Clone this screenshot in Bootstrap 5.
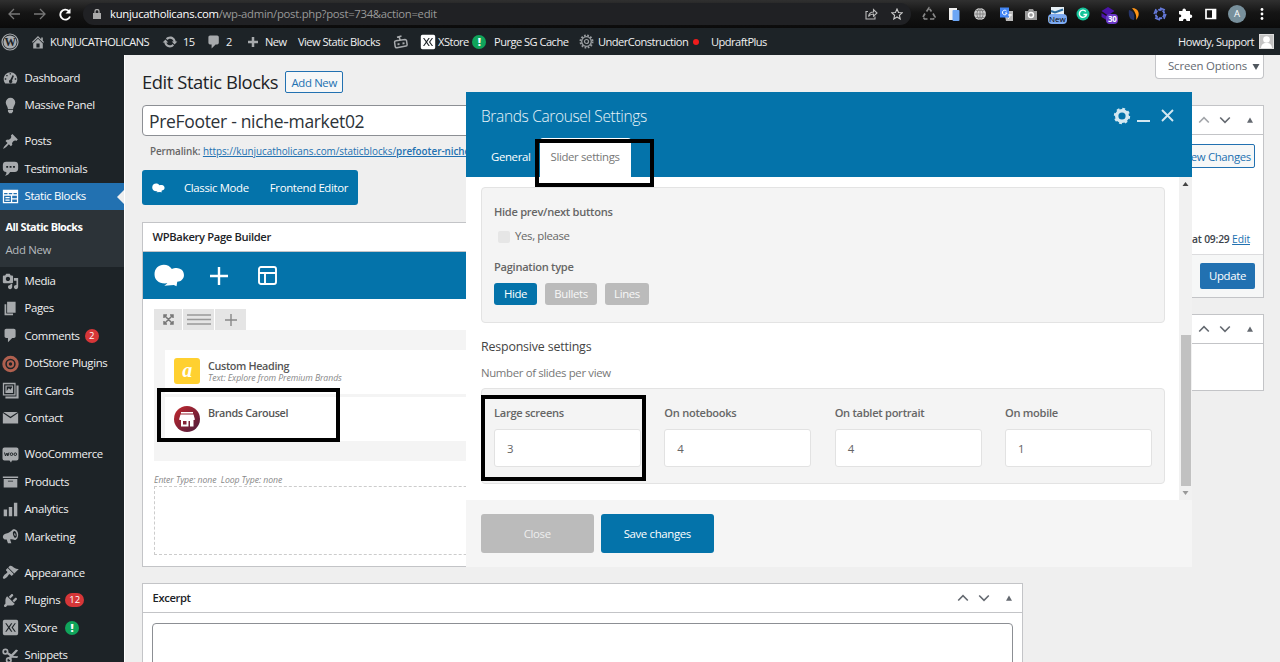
<!DOCTYPE html>
<html lang="en">
<head>
<meta charset="utf-8">
<title>Edit Static Blocks</title>
<link href="https://cdn.jsdelivr.net/npm/bootstrap@5.3.0/dist/css/bootstrap.min.css" rel="stylesheet">
<style>
body{font-family:"Open Sans","Noto Sans",sans-serif;font-size:11.4px;letter-spacing:-.35px;line-height:16px;background:#efefef;color:#3c434a;height:662px;overflow:hidden}
svg{display:block;flex:none}
.chrome-bar{height:28px;background:linear-gradient(#303030,#151515 45%,#0b0b0b);color:#999;padding-left:7px}
.omnibox{width:828px;height:22px;border-radius:11px;background:#202124;padding:0 7px 0 10px;font-size:11.3px;letter-spacing:-.28px}
.chrome-bar .ext{width:16px;margin-right:9.7px}
.wp-bar{height:27px;background:#1d2327;color:#f0f0f1;font-size:11.1px;letter-spacing:-.52px}
.wp-bar .it{display:flex;align-items:center;white-space:nowrap;flex:none}
.wp-side{width:124px;background:#1d2327;color:#f0f0f1;padding-top:9px;height:607px;overflow:hidden;flex:none;box-shadow:1px 0 #fff}
.side-it{height:27.4px;display:flex;align-items:center;padding-left:2px;white-space:nowrap;position:relative}
.side-it svg{margin-right:5.5px;color:#a7aaad}
.side-it.on{background:#2271b1;color:#fff}
.side-it.on svg{color:#fff}
.side-it.on:after{content:"";position:absolute;right:0;top:7px;border:7px solid transparent;border-left:0;border-right-color:#efefef}
.side-gap{height:9px}
.side-sub{background:#2c3338;height:57.4px;padding:5px 0 0 5.5px}
.side-sub div{height:23px;line-height:23px}
.pill{background:#d63638;color:#fff;border-radius:8px;height:14px;min-width:14px;padding:0 4px;font-size:9.5px;line-height:14px;margin-left:5px;text-align:center;letter-spacing:0}
.pill.ok{background:#10a45b;font-weight:800;font-size:11px}
.wp-main{padding-left:18px;width:1156px;height:607px;overflow:hidden}
.scr-opt{width:109px;height:24px;margin-right:16px;background:#fff;border:1px solid #c3c4c7;border-top:0;border-radius:0 0 4px 4px;color:#646970;padding-left:12px;line-height:22px;letter-spacing:-.15px}
.page-ttl{font-size:18.4px;line-height:24px;color:#1d2327;font-weight:400;margin:-1px 7px 0 0;letter-spacing:-.43px}
.o-btn{border:1px solid #2271b1;border-radius:2px;background:#f6f7f7;color:#2271b1;display:block;text-align:center}
.col-l{width:881px}
.col-r{width:240px;margin-left:1px}
.ttl-in{height:31px;border:1px solid #8c8f94;border-radius:4px;background:#fff;font-size:17.5px;letter-spacing:-.32px;color:#2c3338;padding-left:6px;line-height:30px}
.mbox{background:#fff;border:1px solid #c3c4c7}
.mhead{height:29px;border-bottom:1px solid #c3c4c7;display:flex;align-items:center;padding:0 9px 0 9.5px;font-weight:600;color:#1d2327;font-size:11.2px}
.ord{display:flex;align-items:center;margin-left:auto;color:#646970}
.ord svg:nth-child(2){margin:0 15px 0 8.5px}
.ord svg:last-child{margin-right:.5px}
.mode-bar{width:216px;height:35px;background:#0473aa;color:#fff;border-radius:3px;margin-top:11px}
.vc-nav{height:47px;background:#0473aa;padding-left:11px}
.ctl{height:21px;background:#e5e5e5;margin-right:1px;display:flex;align-items:center;justify-content:center}
.vc-row{background:#f4f4f4;height:131px;padding:20px 11px 0}
.vc-el{background:#fff;height:44px;margin-bottom:3px;display:flex;padding:8px 9px 0}
.el-name{line-height:15px;font-weight:600;font-size:10.8px;color:#555}
.hint{font-style:italic;font-size:8.7px;color:#888;line-height:11px;letter-spacing:-.08px}
.dlg{position:absolute;left:466px;top:92px;width:726px;height:475px;background:#fff;color:#666}
.dlg-head{height:85px;background:#0473aa;color:#fff;padding:13px 14px 0 15px}
.dlg-ttl{font-size:15.5px;color:#e8f3f8;font-weight:300;letter-spacing:-.35px}
.dlg-tab{height:38px;line-height:37px;padding:0 10px}
.dlg-tab.on{background:#fff;color:#777;border-radius:3px 3px 0 0;height:39px;width:91px}
.dlg-body{height:323px;padding-left:15px;display:flex}
.pane{background:#f4f4f4;border:1px solid #e3e3e3;border-radius:4px;padding:0 12px;width:684px}
.lbl{font-weight:600;font-size:11.1px;color:#666;letter-spacing:-.28px}
.opt{height:22px;line-height:22px;border-radius:3px;background:#bbb;color:#f7f7f7;text-align:center;margin-right:8px}
.opt.on{background:#0473aa;color:#fff}
.num-in{height:38px;border:1px solid #e2e2e2;border-radius:3px;background:#fff;line-height:37px;padding-left:12px;width:147px;margin-top:8px}
.scrl{width:13px;background:#f1f1f1;margin-left:auto}
.thumb{height:151px;margin:0 1px 0 2px;background:#c1c1c1}
.dlg-foot{height:67px;background:#f5f5f5;padding:14px 15px}
.dlg-foot div{height:39px;line-height:39px;border-radius:3px;text-align:center;color:#fff;width:112.5px}
.mark-box{position:absolute;border:4px solid #000}
</style>
</head>
<body>
<svg width="0" height="0" class="position-absolute" fill="currentColor">
<symbol id="home" viewBox="0 0 20 20"><path d="M16 8.5l1.53 1.53-1.06 1.06L10 4.6l-6.47 6.49-1.06-1.06L10 2.5l4 4v-2h2v4zm-6-2.46l6 5.99V18H4v-5.97zM12 17v-5H8v5h4z"/></symbol>
<symbol id="upd" viewBox="0 0 20 20"><path d="M10.2 3.28c3.53 0 6.43 2.61 6.92 6h2.08l-3.5 4-3.5-4h2.32c-.45-1.97-2.21-3.45-4.32-3.45-1.45 0-2.73.71-3.54 1.78L4.95 5.66C6.23 4.2 8.11 3.28 10.2 3.28zm-.4 13.44c-3.52 0-6.43-2.61-6.92-6H.8l3.5-4 3.5 4H5.48c.45 1.97 2.21 3.45 4.32 3.45 1.45 0 2.73-.71 3.54-1.78l1.71 1.95c-1.28 1.46-3.15 2.38-5.25 2.38z"/></symbol>
<symbol id="com" viewBox="0 0 20 20"><path d="M5 2h9c1.1 0 2 .9 2 2v7c0 1.1-.9 2-2 2h-2l-5 5v-5H5c-1.1 0-2-.9-2-2V4c0-1.1.9-2 2-2z"/></symbol>
<symbol id="dash" viewBox="0 0 20 20"><path fill-rule="evenodd" d="M3.76 17h12.48c1.34-1.63 1.76-3.63 1.76-5.12 0-4.36-3.58-8.06-8-8.06s-8 3.7-8 8.06c0 1.49.42 3.49 1.76 5.12zM9 5h1.600v1.600H9zM5 7h1.600v1.600H5zM3.300 11h1.700v1.600H3.300zM15 11h1.700v1.600H15zM12.600 7.200l1.400 1-2.200 5.300a2 2 0 1 1-2-.8z"/></symbol>
<symbol id="bulb" viewBox="0 0 20 20"><path d="M10 1a5.600 5.600 0 0 0-5.600 5.600c0 2.700 2.100 4.200 2.600 7.400h6c.5-3.200 2.600-4.700 2.600-7.400A5.600 5.600 0 0 0 10 1zM7 15h6v2.200L11.500 19h-3L7 17.200z"/></symbol>
<symbol id="pin" viewBox="0 0 20 20"><path d="M10.44 3.02l1.82-1.82 6.36 6.35-1.83 1.82c-1.05-.68-2.48-.57-3.41.36l-.75.75c-.92.93-1.04 2.35-.35 3.41l-1.83 1.82-2.41-2.41-2.8 2.79c-.42.42-3.38 2.71-3.8 2.290s1.860-3.390 2.280-3.810l2.790-2.790L4.100 9.360l1.830-1.820c1.050.69 2.480.57 3.400-.36l.75-.75c.93-.92 1.050-2.350.36-3.410z"/></symbol>
<symbol id="testi" viewBox="0 0 20 20"><path fill-rule="evenodd" d="M5 2h10a4 4 0 0 1 4 4v4a4 4 0 0 1-4 4H9.500c-1 2-3 4-6 4.500 1.500-1.500 2-3 1.500-4.500a4 4 0 0 1-4-4V6a4 4 0 0 1 4-4zM5 7v2.200h2.200V7zm4 0v2.200h2.200V7zm4 0v2.200h2.200V7z"/></symbol>
<symbol id="stat" viewBox="0 0 20 20"><path fill-rule="evenodd" d="M1 2h18v16H1zm1.500 4v1.300h4V6zm5.500 0v1.300h4V6zm5.500 0v1.300h4V6zM2.500 9v7.500h8V9zm9.500 0v3h5.500V9zm0 4.500v3h5.500v-3zM4 10.500h5V12H4zm0 3h5V15H4z"/></symbol>
<symbol id="media" viewBox="0 0 20 20"><path d="M13 11V4c0-.55-.45-1-1-1h-1.670L9 1H5L3.670 3H2c-.55 0-1 .45-1 1v7c0 .55.45 1 1 1h10c.55 0 1-.45 1-1zM7 4.500c1.380 0 2.500 1.120 2.500 2.500S8.380 9.500 7 9.500 4.500 8.380 4.500 7 5.620 4.500 7 4.500zM14 6h5v10.500c0 1.380-1.120 2.500-2.500 2.500S14 17.880 14 16.500s1.120-2.500 2.500-2.500c.17 0 .34.02.5.05V9h-3V6zm-4 8.050V13h2v3.500c0 1.380-1.120 2.500-2.500 2.500S7 17.880 7 16.500 8.120 14 9.500 14c.17 0 .34.02.5.05z"/></symbol>
<symbol id="pages" viewBox="0 0 20 20"><path d="M6 15V2h10v13H6zm-1 1h8v2H3V5h2v11z"/></symbol>
<symbol id="gift" viewBox="0 0 20 20"><path fill-rule="evenodd" d="M1 1h15v15H1zm1.500 1.500v12h12v-12zM4 4h9v9H4zm1.500 6.500L8 7l2 2 2-3v-.8H5.500zM17 4h2.500v15.500H4V17h13z"/></symbol>
<symbol id="mail" viewBox="0 0 20 20"><path d="M1 4.800L10 11l9-6.200V17H1zM1.500 3.500h17L10 9.200z"/></symbol>
<symbol id="arch" viewBox="0 0 20 20"><path d="M19 4v2H1V4h18zM2 7h16v10H2V7zm11 3V9H7v1h6z"/></symbol>
<symbol id="bars" viewBox="0 0 20 20"><path d="M18 18V2h-4v16h4zm-6 0V7H8v11h4zm-6 0v-8H2v8h4z"/></symbol>
<symbol id="mega" viewBox="0 0 20 20"><path fill-rule="evenodd" d="M13 1.500c3.500-.8 6 2.500 6 6s-1.500 6.500-4 6.500c-2-.5-3.500-.8-5.500-.5L11 18H7l-1.500-4.500C3 14 1 12.500 1 10.500S2.500 7 5 6.500c3-.7 5.500-2.500 8-5zm1.500 2c-1.500.3-2 1.800-1.500 4s1.700 4.500 3 4 1.700-2.500 1.200-4.500-1.500-3.700-2.700-3.500zm-.5 3h1.500l.8 2.500H15z"/></symbol>
<symbol id="brush" viewBox="0 0 20 20"><path d="M14.480 11.060L7.410 3.990l1.500-1.500c.5-.56 2.300-.47 3.510.32 1.210.8 1.430 1.280 2.910 2.100 1.180.64 2.450 1.260 4.450.85zm-.71.71L6.700 4.700 4.930 6.470c-.39.39-.39 1.020 0 1.410l1.060 1.060c.39.39.39 1.030 0 1.420-.6.600-1.430 1.110-2.210 1.690-.35.26-.7.530-1.010.84C1.430 14.230.400 16.080 1.400 17.070c.99 1 2.840-.03 4.180-1.360.31-.31.58-.66.85-1.020.57-.78 1.080-1.610 1.690-2.210.39-.39 1.020-.39 1.410 0l1.060 1.060c.39.39 1.020.39 1.410 0z"/></symbol>
<symbol id="plug" viewBox="0 0 20 20"><path d="M13.110 4.360L9.870 7.600 8 5.730l3.240-3.240c.35-.34 1.050-.2 1.560.32.52.51.66 1.210.31 1.550zm-8 1.770l.91-1.120 9.010 9.010-1.190.84c-.71.71-2.630 1.160-3.820 1.160H6.140L4.900 17.260c-.59.59-1.540.59-2.120 0-.59-.58-.59-1.530 0-2.120l1.240-1.240v-3.880c0-1.130.4-3.190 1.090-3.890zm7.260 3.970l3.240-3.240c.34-.35 1.040-.21 1.550.31.52.51.66 1.210.31 1.550l-3.240 3.250z"/></symbol>
<symbol id="xs" viewBox="0 0 20 20"><path fill-rule="evenodd" d="M3 1h14a2 2 0 0 1 2 2v14a2 2 0 0 1-2 2H3a2 2 0 0 1-2-2V3a2 2 0 0 1 2-2zm.8 4l3.400 5-3.400 5h1.500L8 11.100 10.700 15h1.500L8.900 10l3.300-5h-1.500L8 8.900 5.300 5zM14.800 5l-3.600 5 3.600 5h1.500l-3.500-5 3.500-5z"/></symbol>
<symbol id="sciss" viewBox="0 0 20 20"><g fill="none" stroke="currentColor" stroke-width="2"><circle cx="4" cy="5.500" r="2.600"/><circle cx="8" cy="15.500" r="2.600"/></g><path d="M6 5.500l5 3 5.500-5.500 2.500 1-6 6.500 6 .5-1 2-6.500-.5-2 3-2-1.500 1.500-3.500-4-3z"/></symbol>
<symbol id="up" viewBox="0 0 12 12"><path d="M1.200 8.500L6 3.700l4.800 4.800" fill="none" stroke="currentColor" stroke-width="1.600"/></symbol>
<symbol id="dn" viewBox="0 0 12 12"><path d="M1.200 3.500L6 8.300l4.800-4.800" fill="none" stroke="currentColor" stroke-width="1.600"/></symbol>
<symbol id="tri" viewBox="0 0 8 8"><path d="M4 1.500L7 6.700H1z"/></symbol>
<symbol id="cloud" viewBox="0 0 30 22"><path d="M9.500.5c3.300 0 6 1.500 7.800 4.200C20 3.500 22 3.800 23 4c3.500.3 6 3 6 6.500 0 3.800-3 6.500-6.500 6.500l-.7 4.500-2.600-1.300-9.200.8 3-2.500C5 19.500.5 15.500.5 9.800S4.500.5 9.500.5z"/></symbol>
</svg>

<header class="chrome-bar d-flex align-items-center">
  <svg width="14" height="14" viewBox="0 0 14 14" fill="none" stroke="#777" stroke-width="1.300"><path d="M13 7H2M7 2L2 7l5 5"/></svg>
  <svg class="ms-2 me-2" width="22" height="14" viewBox="-4 0 22 14" fill="none" stroke="#777" stroke-width="1.300"><path d="M1 7h11M7 2l5 5-5 5"/></svg>
  <svg width="13" height="13" viewBox="0 0 13 13" fill="none" stroke="#fff" stroke-width="1.900"><path d="M11 8.500A5 5 0 1 1 9.800 3"/><path d="M11.500.5v5h-5z" fill="#fff" stroke="none"/></svg>
  <div class="omnibox d-flex align-items-center" style="margin-left:11px">
    <svg width="8" height="10" viewBox="0 0 8 10"><path d="M0 4h8v6H0z" fill="#aaa"/><path d="M2 4V2.500a2 2 0 0 1 4 0V4" fill="none" stroke="#aaa" stroke-width="1.300"/></svg>
    <span style="margin-left:9px"><span class="text-white">kunjucatholicans.com</span>/wp-admin/post.php?post=734&amp;action=edit</span>
    <svg class="ms-auto" width="13" height="12" viewBox="0 0 13 12" fill="none" stroke="#bbb" stroke-width="1.100"><path d="M3 3.500H1v7.500h9V8.500M3.500 8.500C4 5.500 6 4 8.500 4V1.500L12 5 8.500 8.200V6C6.500 6 5 6.500 3.500 8.500z"/></svg>
    <svg width="12" height="12" viewBox="0 0 12 12" fill="none" stroke="#ccc" stroke-width="1.100" style="margin:0 1px 0 13px"><path d="M6 1l1.500 3.500 3.700.3-2.800 2.500.8 3.700L6 9l-3.200 2 .8-3.700L.8 4.800l3.700-.3z"/></svg>
  </div>
  <div class="d-flex align-items-center" style="margin-left:9.500px">
    <svg class="ext" height="16" viewBox="0 0 16 16" fill="none" stroke="#888" stroke-width="1.700"><path d="M5.500 5.500L8 2l2.500 3.500M12 7.500l2 3.500-1.500 2H9M6.500 13H3.500L2 11l2-3.500" stroke-dasharray="4.500 1"/></svg>
    <svg class="ext" height="16" viewBox="0 0 16 16"><path d="M3 2h8v12H3z" fill="#eee"/><rect x="6.500" y="4" width="7" height="11" rx="1" fill="#6ca6f5"/></svg>
    <svg class="ext" height="16" viewBox="0 0 16 16"><circle cx="8" cy="8" r="6" fill="#ccc"/><path d="M2 8h12M8 2v12M3.500 4.500h9M3.500 11.500h9M8 2c-4 3-4 9 0 12 4-3 4-9 0-12" fill="none" stroke="#777" stroke-width=".8"/></svg>
    <svg class="ext" height="16" viewBox="0 0 16 16"><path d="M6 5h9v10H8z" fill="#bbb"/><rect x="2" y="1.500" width="9" height="10" fill="#4285f4"/><path d="M8.500 5A2.300 2.300 0 1 0 9 7H7M10 9h4M12 8v1c0 2-1 3-2 4" fill="none" stroke="#fff"/></svg>
    <svg class="ext" height="16" viewBox="0 0 16 16"><path d="M2 5h3l1-2h4l1 2h3v9H2z" fill="#999"/><circle cx="8" cy="9" r="2.500" fill="#999" stroke="#fff" stroke-width="1.400"/></svg>
    <div class="ext position-relative" style="height:16px"><svg width="16" height="16" viewBox="0 0 16 16"><path d="M2 1h13v8H2z" fill="#e7eff5"/><path d="M2 5l4 1.500 8-3" stroke="#2a6ca0" stroke-width="2" fill="none"/></svg><span class="position-absolute rounded-1 text-black" style="left:-1px;top:8px;width:19px;height:10px;background:#7daaf0;font-size:8px;line-height:10px;text-align:center;letter-spacing:0">New</span></div>
    <svg class="ext" height="16" viewBox="0 0 16 16"><circle cx="8" cy="8" r="6.500" fill="#15c39a"/><path d="M10.800 5.500a3.600 3.600 0 1 0 .7 3H8.500" stroke="#fff" stroke-width="1.400" fill="none"/></svg>
    <div class="ext position-relative" style="height:16px"><svg width="16" height="16" viewBox="0 0 16 16"><path d="M8 1l6.500 4L8 9.500 1.500 5zM1.500 7l6.500 4v4l-6.500-4z" fill="#4b14a8"/></svg><span class="position-absolute rounded-1 text-white fw-bold" style="left:6px;top:8px;width:12px;height:10px;background:#6b38c8;font-size:8px;line-height:10px;text-align:center">30</span></div>
    <svg class="ext" height="16" viewBox="0 0 16 16"><path d="M3 4c5 1 6 5 5 10-4 0-6-4-5-10z" fill="#26356c"/><path d="M6 2c7 0 9 7 4 12 1-5-1-8-4-12z" fill="#ff9418"/></svg>
    <svg class="ext" height="16" viewBox="0 0 16 16" fill="none" stroke="#6478d8" stroke-width="2"><circle cx="8" cy="8" r="4.300" stroke-dasharray="3.500 1"/><path d="M8 2l5 2M14 8l-2 5M8 14l-5-2M2 8l2-5" stroke-width="1.400"/></svg>
    <svg class="ext" height="16" viewBox="0 0 16 16"><path d="M2 5h3.500c-.8-3.500 4-3.500 3.500 0h4v3.500c3-.5 3 4 0 3.500V15H9.500c0-3-3.500-3-3.500 0H2v-3.500c3 0 3-3.200 0-3.200z" fill="#fff"/></svg>
    <svg class="ext" height="16" viewBox="0 0 16 16"><path d="M3 3.500h9.500v9H3z" fill="none" stroke="#fff" stroke-width="1.700"/><path d="M9 3h4v10H9z" fill="#fff"/></svg>
    <div class="rounded-circle text-white text-center" style="width:18px;height:18px;line-height:18px;background:#78909c;font-size:9.500px;margin-left:-1px">A</div>
    <svg style="margin-left:14px" width="4" height="12" viewBox="0 0 4 12" fill="#fff"><circle cx="2" cy="1.500" r="1.400"/><circle cx="2" cy="6" r="1.400"/><circle cx="2" cy="10.500" r="1.400"/></svg>
  </div>
</header>

<nav class="wp-bar d-flex align-items-center">
  <svg width="18" height="18" viewBox="0 0 18 18" style="margin:0 11px 0 1px"><circle cx="9" cy="9" r="8" fill="none" stroke="#a7aaad" stroke-width="1.200"/><circle cx="9" cy="9" r="6.600" fill="#a7aaad"/><text x="9" y="13.200" text-anchor="middle" font-family="Liberation Serif" font-weight="bold" font-size="11.500" fill="#1d2327">W</text></svg>
  <span class="it" style="width:132px"><svg width="16" height="16" fill="#a7aaad"><use href="#home"/></svg><span style="margin-left:4px;letter-spacing:-.6px">KUNJUCATHOLICANS</span></span>
  <span class="it" style="width:44px"><svg width="16" height="16" fill="#a7aaad"><use href="#upd"/></svg><span style="margin-left:5px">15</span></span>
  <span class="it" style="width:41px"><svg width="16" height="16" fill="#a7aaad"><use href="#com"/></svg><span style="margin-left:4px">2</span></span>
  <span class="it" style="width:51px"><svg width="12" height="12" viewBox="0 0 12 12" stroke="#a7aaad" stroke-width="2.500"><path d="M6 1v10M1 6h10"/></svg><span style="margin-left:6px">New</span></span>
  <span class="it" style="width:95px">View Static Blocks</span>
  <span class="it" style="width:27px"><svg width="15" height="16" viewBox="0 0 15 16" fill="none" stroke="#a7aaad" stroke-width="1.500"><path d="M3 6.800l9-1.300a1.500 1.500 0 0 1 1.500 1l.6 4a1.500 1.500 0 0 1-1.200 1.600l-9 1.600a1.500 1.500 0 0 1-1.700-1.200L1.600 8.500A1.500 1.500 0 0 1 3 6.800zM7 6L6.300 3M4 3.200L8.500 2"/><path d="M4.500 10.300l2-.3M9.500 9.500l2-.3" stroke-width="1.800"/></svg></span>
  <span class="it" style="width:74px"><svg width="16" height="16" fill="#fff"><use href="#xs"/></svg><span style="margin-left:2px">XStore</span><span class="pill ok" style="margin-left:3.500px">!</span></span>
  <span class="it" style="width:85px">Purge SG Cache</span>
  <span class="it" style="width:132px"><svg width="15" height="15" viewBox="0 0 15 15" fill="none" stroke="#999da0"><circle cx="7.500" cy="7.500" r="6" stroke-width="2" stroke-dasharray="1.700 1.440"/><circle cx="7.500" cy="7.500" r="4.800" stroke-width="1.300"/><circle cx="7.500" cy="7.500" r="2" stroke-width="1.200"/></svg><span style="margin-left:4px">UnderConstruction</span><i class="rounded-circle" style="width:6px;height:6px;background:#f01c1c;margin-left:5px"></i></span>
  <span class="it">UpdraftPlus</span>
  <span class="it ms-auto">Howdy, Support<svg width="15" height="15" viewBox="0 0 15 15" style="margin:0 6px 0 5px"><path d="M0 0h15v15H0z" fill="#ddd"/><path d="M1 1h13v13H1z" fill="#c3c3c3"/><circle cx="7.500" cy="5.500" r="3.300" fill="#fff"/><path d="M2 14c0-3 2-4.500 4-5h3c2 .5 4 2 4 5z" fill="#fff"/></svg></span>
</nav>

<div class="d-flex">
<aside class="wp-side">
  <div class="side-it"><svg width="17" height="17" fill="currentColor"><use href="#dash"/></svg>Dashboard</div>
  <div class="side-it"><svg width="17" height="17" fill="currentColor"><use href="#bulb"/></svg>Massive Panel</div>
  <div class="side-gap"></div>
  <div class="side-it"><svg width="17" height="17" fill="currentColor"><use href="#pin"/></svg>Posts</div>
  <div class="side-it"><svg width="17" height="17" fill="currentColor"><use href="#testi"/></svg>Testimonials</div>
  <div class="side-it on"><svg width="17" height="17" fill="currentColor"><use href="#stat"/></svg>Static Blocks</div>
  <div class="side-sub"><div class="fw-bold text-white" style="font-size:10.900px;letter-spacing:-.6px;word-spacing:.5px">All Static Blocks</div><div style="color:#b4b9be">Add New</div></div>
  <div class="side-it"><svg width="17" height="17" fill="currentColor"><use href="#media"/></svg>Media</div>
  <div class="side-it"><svg width="17" height="17" fill="currentColor"><use href="#pages"/></svg>Pages</div>
  <div class="side-it"><svg width="17" height="17" fill="currentColor"><use href="#com"/></svg>Comments<span class="pill">2</span></div>
  <div class="side-it"><svg width="17" height="17" viewBox="0 0 17 17" fill="none" stroke="#b0604f" style="overflow:visible"><circle cx="8.500" cy="9" r="6.700" stroke-width="3"/><circle cx="8.500" cy="9" r="2.700" stroke-width="2"/></svg>DotStore Plugins</div>
  <div class="side-it"><svg width="17" height="17" fill="currentColor"><use href="#gift"/></svg>Gift Cards</div>
  <div class="side-it"><svg width="17" height="17" fill="currentColor"><use href="#mail"/></svg>Contact</div>
  <div class="side-gap"></div>
  <div class="side-it"><svg width="17" height="17" viewBox="0 0 17 17"><path d="M2.500 1.500h12a2 2 0 0 1 2 2v9a2 2 0 0 1-2 2H10l-1 2-1.500-2h-5a2 2 0 0 1-2-2v-9a2 2 0 0 1 2-2z" fill="#a7aaad"/><path d="M2.500 6.500l1 3.500 1.500-3 .8 3 1.200-3.500" fill="none" stroke="#1d2327"/><circle cx="9.500" cy="8.200" r="1.300" fill="none" stroke="#1d2327"/><circle cx="13.300" cy="8.200" r="1.300" fill="none" stroke="#1d2327"/></svg>WooCommerce</div>
  <div class="side-it"><svg width="17" height="17" fill="currentColor"><use href="#arch"/></svg>Products</div>
  <div class="side-it"><svg width="17" height="17" fill="currentColor"><use href="#bars"/></svg>Analytics</div>
  <div class="side-it"><svg width="17" height="17" fill="currentColor"><use href="#mega"/></svg>Marketing</div>
  <div class="side-gap"></div>
  <div class="side-it"><svg width="17" height="17" fill="currentColor"><use href="#brush"/></svg>Appearance</div>
  <div class="side-it"><svg width="17" height="17" fill="currentColor"><use href="#plug"/></svg>Plugins<span class="pill">12</span></div>
  <div class="side-it"><svg width="17" height="17" fill="currentColor"><use href="#xs"/></svg>XStore<span class="pill ok" style="margin-left:8px">!</span></div>
  <div class="side-it"><svg width="17" height="17" fill="currentColor"><use href="#sciss"/></svg>Snippets</div>
</aside>

<main class="wp-main">
  <div class="d-flex justify-content-between" style="height:50px">
    <div class="d-flex" style="padding-top:16px"><h1 class="page-ttl">Edit Static Blocks</h1><span class="o-btn" style="width:58px;height:22px;line-height:22px">Add New</span></div>
    <div class="scr-opt d-flex">Screen Options <svg width="8" height="8" viewBox="0 0 8 8" style="margin:8px 0 0 5px" fill="#50575e"><path d="M.5 1h7L4 7z"/></svg></div>
  </div>
  <div class="d-flex">
    <div class="col-l">
      <div class="ttl-in">PreFooter - niche-market02</div>
      <div style="width:326px;overflow:hidden;height:23px;line-height:31px;padding-left:8px;font-size:9.900px;letter-spacing:-.03px;white-space:nowrap"><span style="color:#666;font-weight:600;letter-spacing:-.1px">Permalink:</span> <u style="color:#2271b1">https://kunjucatholicans.com/staticblocks/<span style="font-weight:600">prefooter-niche</span></u></div>
      <div class="mode-bar d-flex align-items-center"><svg width="13" height="10" fill="#fff" style="margin:0 19px 0 10px"><use href="#cloud"/></svg>Classic Mode<span style="margin-left:21px">Frontend Editor</span></div>
      <div class="mbox" style="margin-top:17px;height:345px">
        <div class="mhead">WPBakery Page Builder</div>
        <div class="vc-nav d-flex align-items-center text-white">
          <svg width="31" height="23" fill="#fff"><use href="#cloud"/></svg>
          <svg width="18" height="18" viewBox="0 0 18 18" stroke="#fff" stroke-width="2.400" style="margin:0 30px 0 25px"><path d="M9 0v18M0 9h18"/></svg>
          <svg width="19" height="19" viewBox="0 0 19 19" fill="none" stroke="#fff" stroke-width="1.900"><rect x="1" y="1" width="17" height="17" rx="2"/><path d="M1 7h17M7 7v11"/></svg>
        </div>
        <div style="padding:10px 11px 0">
          <div class="d-flex">
            <div class="ctl" style="width:28px"><svg width="11" height="11" viewBox="0 0 11 11" fill="none" stroke="#777" stroke-width="1.500"><path d="M1 4V1h3M7 1h3v3M10 7v3H7M4 10H1V7M1 1l9 9M10 1l-9 9"/></svg></div>
            <div class="ctl" style="width:31px"><svg width="24" height="11" viewBox="0 0 24 11" stroke="#999" stroke-width="1.400"><path d="M0 1h24M0 5.500h24M0 10h24"/></svg></div>
            <div class="ctl" style="width:31px"><svg width="12" height="12" viewBox="0 0 12 12" stroke="#888" stroke-width="1.400"><path d="M6 0v12M0 6h12"/></svg></div>
          </div>
          <div class="vc-row">
            <div class="vc-el"><svg width="26" height="26" viewBox="0 0 26 26"><rect width="26" height="26" rx="3" fill="#ffd030"/><text x="13" y="18.500" text-anchor="middle" font-family="Liberation Serif" font-weight="bold" font-style="italic" font-size="20" fill="#fff">a</text></svg>
              <div style="margin-left:8px"><div class="el-name">Custom Heading</div><div class="hint">Text: Explore from Premium Brands</div></div></div>
            <div class="vc-el"><svg width="26" height="26" viewBox="0 0 26 26" style="margin-top:1px"><defs><linearGradient id="rg" x2="1" y2="1"><stop stop-color="#c5282e"/><stop offset="1" stop-color="#4a1c3c"/></linearGradient></defs><circle cx="13" cy="13" r="13" fill="url(#rg)"/><path fill="#fff" fill-rule="evenodd" d="M7 6h12v1.500H7zm-.5 2.500h13l1.200 4V14h-1.200v6.500h-3.500V15h-1.500v5.500H7V14H5.300v-1.500zM9 15v3.500h3.500V15z"/></svg>
              <div class="el-name" style="margin-left:8px">Brands Carousel</div></div>
          </div>
          <div class="hint" style="margin-top:14px">Enter Type: none &nbsp;Loop Type: none</div>
          <div style="height:69px;border:1px dashed #ccc"></div>
        </div>
      </div>
      <div class="mbox" style="margin-top:16px;height:120px">
        <div class="mhead">Excerpt<span class="ord"><svg width="12" height="12"><use href="#up"/></svg><svg width="12" height="12"><use href="#dn"/></svg><svg width="8" height="8" fill="#646970"><use href="#tri"/></svg></span></div>
        <div style="margin:10px 9px 0;height:44px;border:1px solid #8c8f94;border-radius:4px"></div>
      </div>
    </div>
    <div class="col-r">
      <div class="mbox" style="height:193px">
        <div class="mhead"><span class="ord"><svg width="12" height="12" opacity=".6"><use href="#up"/></svg><svg width="12" height="12"><use href="#dn"/></svg><svg width="8" height="8" fill="#646970"><use href="#tri"/></svg></span></div>
        <div style="padding:9px 8px 0"><span class="o-btn ms-auto" style="width:93px;height:24px;line-height:23px">Preview Changes</span></div>
        <div class="text-end" style="padding:63px 13px 0 0;height:86px;font-size:10.300px;letter-spacing:-.1px"><span style="font-weight:600;letter-spacing:-.2px">at 09:29</span> <u style="color:#2271b1">Edit</u></div>
        <div style="background:#f6f7f7;border-top:1px solid #dcdcde;height:43px;padding:8px 8px 0"><div class="ms-auto text-white text-center" style="background:#2271b1;border-radius:2px;width:55px;height:26px;line-height:26px">Update</div></div>
      </div>
      <div class="mbox" style="height:77px;margin-top:16px">
        <div class="mhead"><span class="ord"><svg width="12" height="12"><use href="#up"/></svg><svg width="12" height="12"><use href="#dn"/></svg><svg width="8" height="8" fill="#646970"><use href="#tri"/></svg></span></div>
      </div>
    </div>
  </div>
</main>
</div>

<section class="dlg">
  <div class="dlg-head">
    <div class="d-flex align-items-center" style="height:21px"><span class="dlg-ttl">Brands Carousel Settings</span>
      <span class="ms-auto d-flex align-items-center" style="color:#d4e8f1;margin-right:4px"><svg width="18" height="18" viewBox="0 0 18 18"><circle cx="9" cy="9" r="5.300" fill="none" stroke="currentColor" stroke-width="3.400"/><circle cx="9" cy="9" r="7.200" fill="none" stroke="currentColor" stroke-width="2" stroke-dasharray="2.830 2.830"/></svg><svg width="13" height="14" viewBox="0 0 13 14" style="margin:0 11px 0 6px"><path d="M0 11h13v2H0z" fill="currentColor"/></svg><svg width="13" height="13" viewBox="0 0 13 13" stroke="currentColor" stroke-width="1.900"><path d="M1 1l11 11M12 1L1 12"/></svg></span></div>
    <div class="d-flex" style="margin-top:12px"><div class="dlg-tab">General</div><div class="dlg-tab on">Slider settings</div></div>
  </div>
  <div class="dlg-body">
    <div>
      <div class="pane" style="height:136px;margin-top:10px;padding-top:16px">
        <div class="lbl">Hide prev/next buttons</div>
        <div class="d-flex align-items-center" style="margin-top:8px"><i style="width:12px;height:12px;background:#e6e6e6;border-radius:2px;margin:1px 5px 0 4px"></i>Yes, please</div>
        <div class="lbl" style="margin-top:15px">Pagination type</div>
        <div class="d-flex" style="margin-top:8px"><div class="opt on" style="width:43px">Hide</div><div class="opt" style="width:52px">Bullets</div><div class="opt" style="width:44px">Lines</div></div>
      </div>
      <div style="margin-top:16px;font-size:12.400px;color:#444;letter-spacing:-.17px">Responsive settings</div>
      <div style="margin-top:10px;color:#777">Number of slides per view</div>
      <div class="pane d-flex justify-content-between" style="margin-top:7px;height:96px;padding-top:16px">
        <div><div class="lbl">Large screens</div><div class="num-in">3</div></div>
        <div><div class="lbl">On notebooks</div><div class="num-in">4</div></div>
        <div><div class="lbl">On tablet portrait</div><div class="num-in">4</div></div>
        <div><div class="lbl">On mobile</div><div class="num-in">1</div></div>
      </div>
    </div>
    <div class="scrl d-flex flex-column"><svg class="mx-auto mt-1" width="7" height="6" viewBox="0 0 7 6"><path d="M3.500 1L6.500 5h-6z" fill="#444"/></svg><div class="thumb mt-auto"></div><svg class="mx-auto" style="margin:4px 0 4px" width="7" height="6" viewBox="0 0 7 6"><path d="M3.500 5L6.500 1h-6z" fill="#999"/></svg></div>
  </div>
  <div class="dlg-foot d-flex"><div style="background:#bbb;color:#eee">Close</div><div style="background:#0473aa;margin-left:7.500px">Save changes</div></div>
</section>
<div class="mark-box" style="left:535px;top:139px;width:119px;height:48px"></div>
<div class="mark-box" style="left:157px;top:388px;width:183px;height:54px"></div>
<div class="mark-box" style="left:481px;top:395px;width:165px;height:86px"></div>
</body>
</html>
